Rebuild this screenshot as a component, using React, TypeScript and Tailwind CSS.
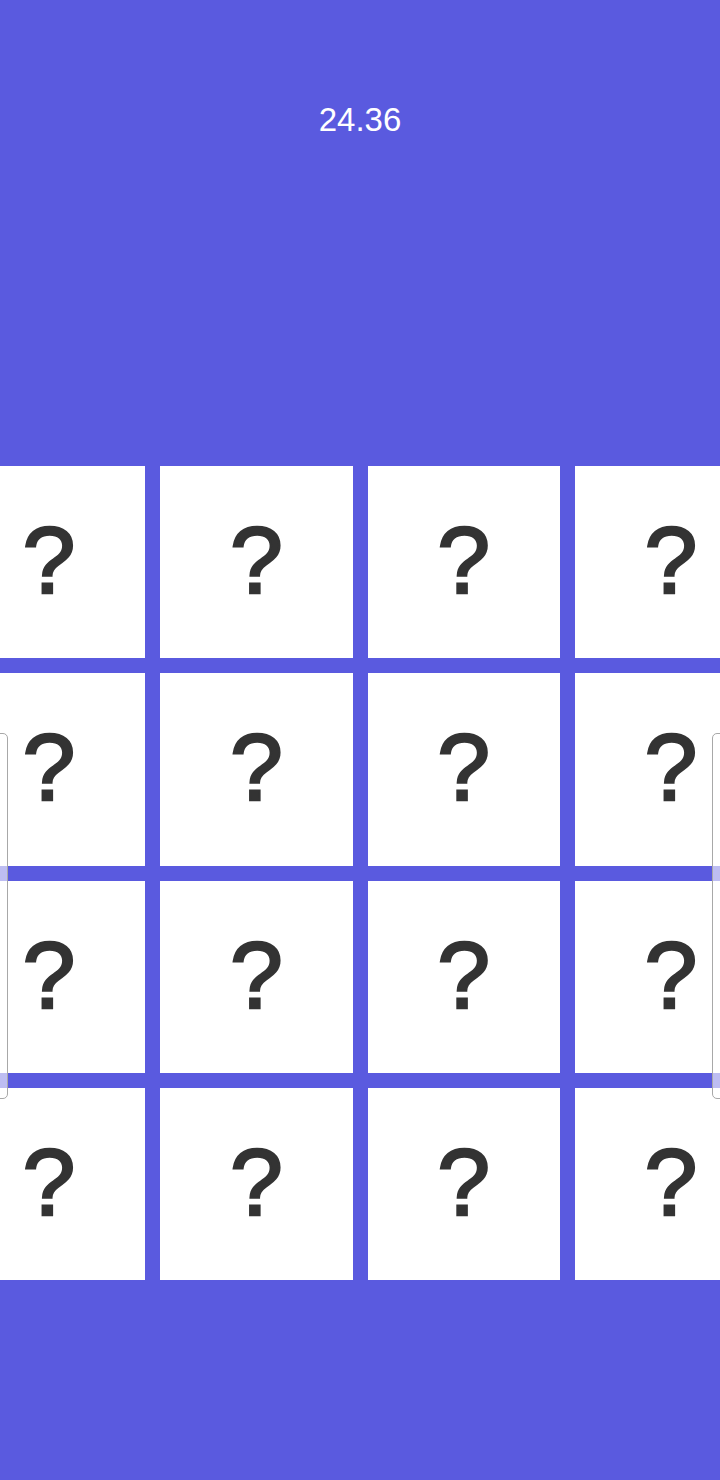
import React from "react";

export default function App() {
  const tiles = Array.from({ length: 16 }, (_, i) => i);
  return (
    <div
      className="relative h-[1480px] w-[720px] overflow-hidden bg-[#5a5adf] flex flex-col items-center"
      style={{ fontFamily: '"Liberation Sans", Arial, sans-serif' }}
    >
      <div className="pt-[103px] h-[466px] text-white text-[33px] leading-none shrink-0">24.36</div>
      <div className="grid shrink-0 grid-cols-[repeat(4,192.33px)] grid-rows-[repeat(4,192.33px)] gap-[15px]">
        {tiles.map((i) => (
          <div key={i} className="bg-white flex items-center justify-center">
            <span className="text-[#333333] text-[95px] leading-none -mt-[3px] [-webkit-text-stroke:2.5px_#333333]">?</span>
          </div>
        ))}
      </div>
      <div className="absolute left-[-10px] top-[733px] h-[366px] w-[18px] rounded-[5px] border border-[#a8a8a8] bg-white/60" />
      <div className="absolute left-[712px] top-[733px] h-[366px] w-[18px] rounded-[5px] border border-[#a8a8a8] bg-white/60" />
    </div>
  );
}
